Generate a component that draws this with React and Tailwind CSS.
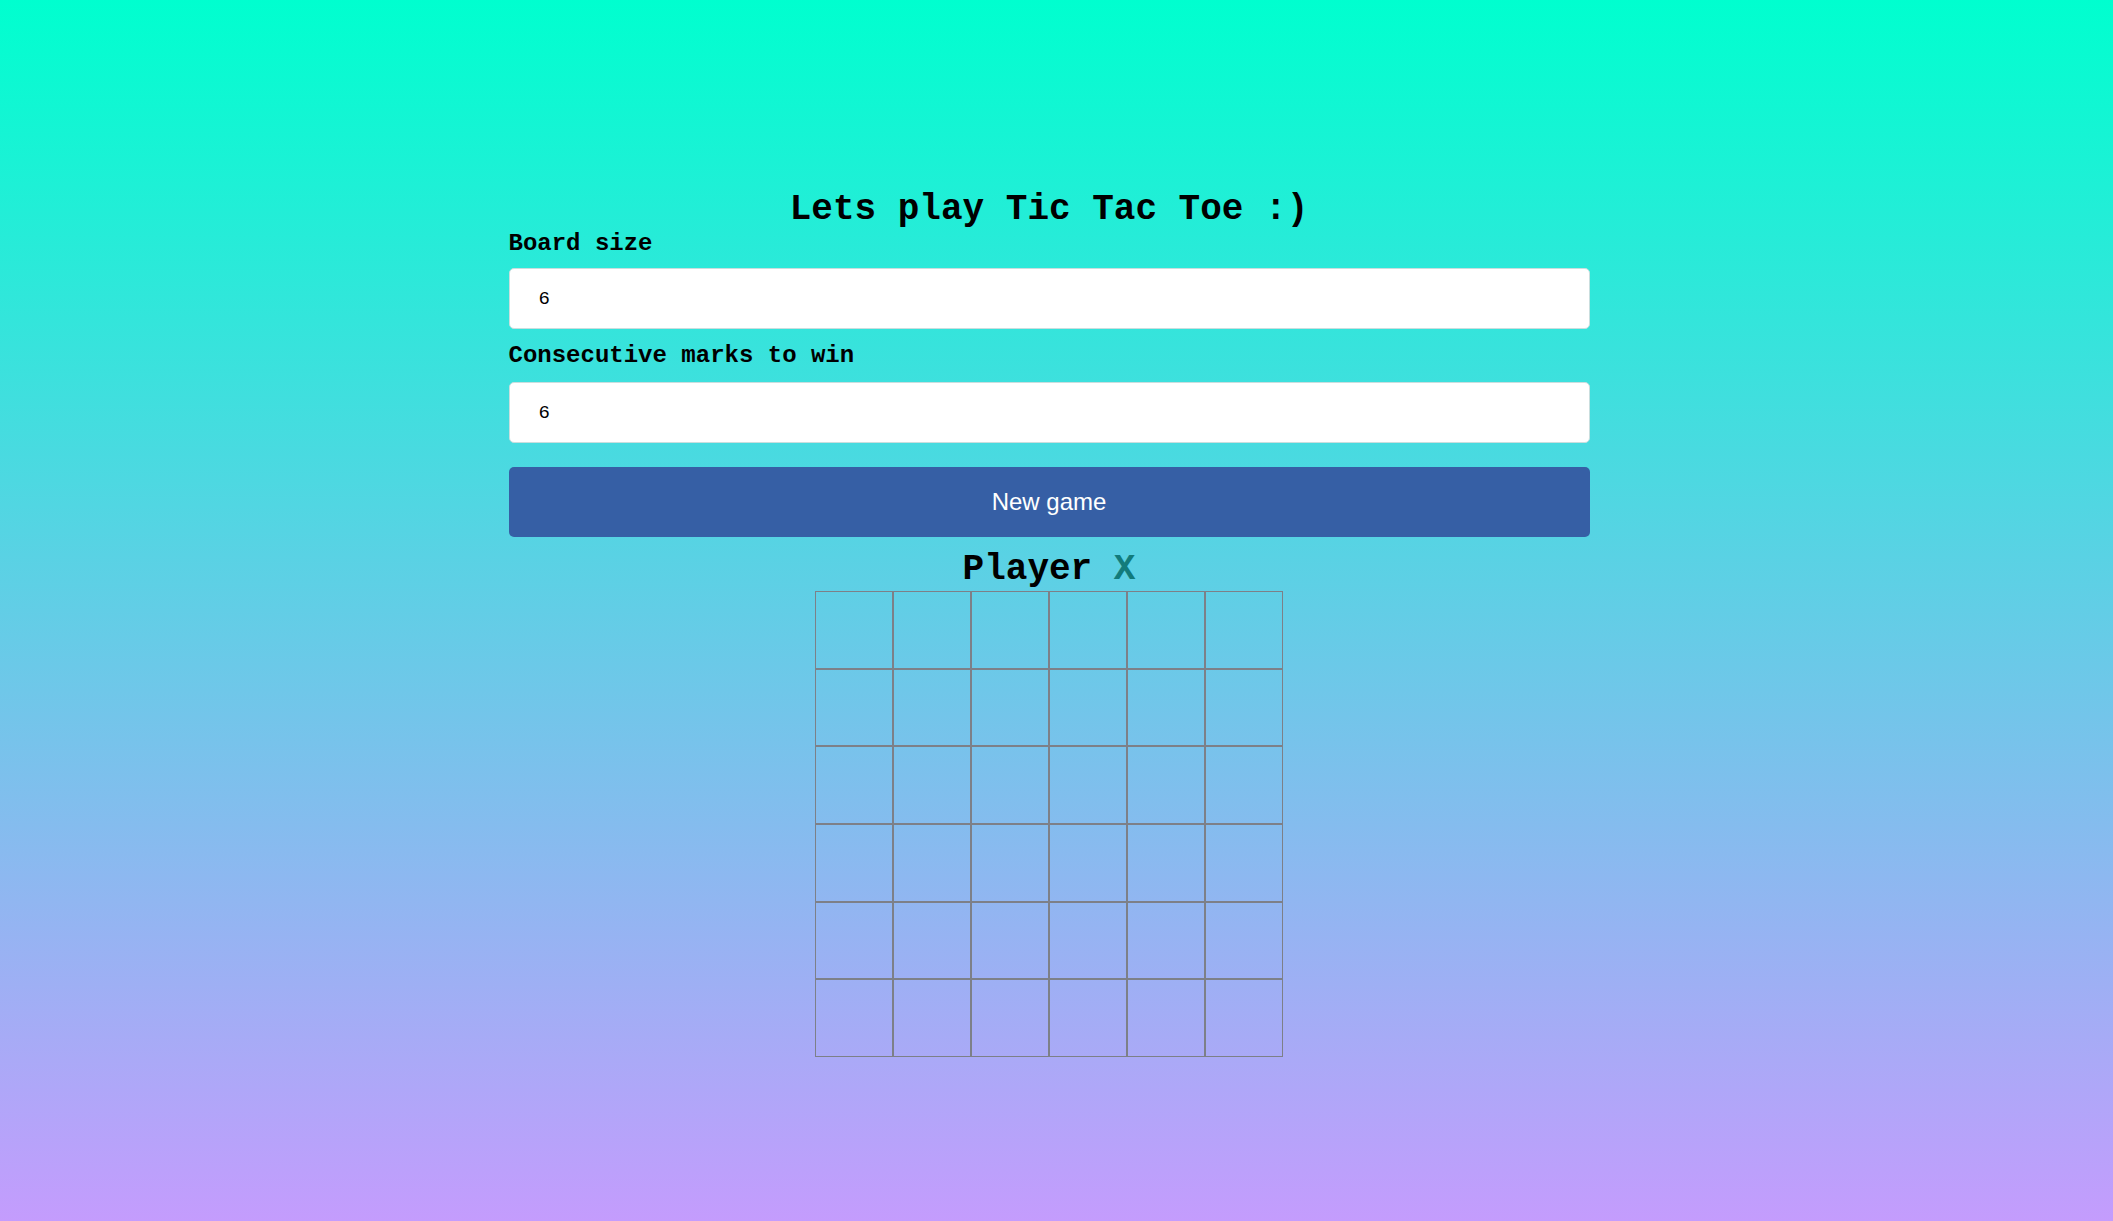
import { useState } from "react";

export default function App() {
  const [boardSize, setBoardSize] = useState(6);
  const [toWin, setToWin] = useState(6);
  const [player] = useState('X');

  const cells = Array.from({ length: boardSize * boardSize });

  return (
    <div className="h-screen w-full bg-[linear-gradient(to_bottom,#00ffcf,#c49cfd)] pr-[15px] font-['Liberation_Mono','Courier_New',monospace] text-black">
      <div className="mx-auto w-[1081px] pt-[189px]">
        <h1 className="text-center text-[36px] font-bold leading-[41px]">Lets play Tic Tac Toe :)</h1>

        {/* Settings */}
        <label className="block text-[24px] font-bold leading-[27px]">Board size</label>
        <input
          type="text"
          value={boardSize}
          onChange={(e) => setBoardSize(Number(e.target.value) || 0)}
          className="mt-[11px] mb-[13px] block h-[61px] w-full rounded-[5px] border border-[#c9dede] bg-white pl-[29px] text-[19px] text-black outline-none"
        />

        <label className="block text-[24px] font-bold leading-[27px]">Consecutive marks to win</label>
        <input
          type="text"
          value={toWin}
          onChange={(e) => setToWin(Number(e.target.value) || 0)}
          className="mt-[13px] block h-[61px] w-full rounded-[5px] border border-[#c9dede] bg-white pl-[29px] text-[19px] text-black outline-none"
        />

        <button className="mt-[24px] block h-[70px] w-full rounded-[5px] bg-[#365fa5] font-['Liberation_Sans',Arial,sans-serif] text-[24px] text-white">
          New game
        </button>

        {/* Game */}
        <div className="mt-[12px] text-center text-[36px] font-bold leading-[41px]">
          Player <span className="text-[#127b7b]">{player}</span>
        </div>

        <div className="mx-auto mt-[1px] grid w-[468px] grid-cols-6">
          {cells.map((_, i) => (
            <div key={i} className="h-[77.7px] border border-[#7d8088]"></div>
          ))}
        </div>
      </div>
    </div>
  );
}
